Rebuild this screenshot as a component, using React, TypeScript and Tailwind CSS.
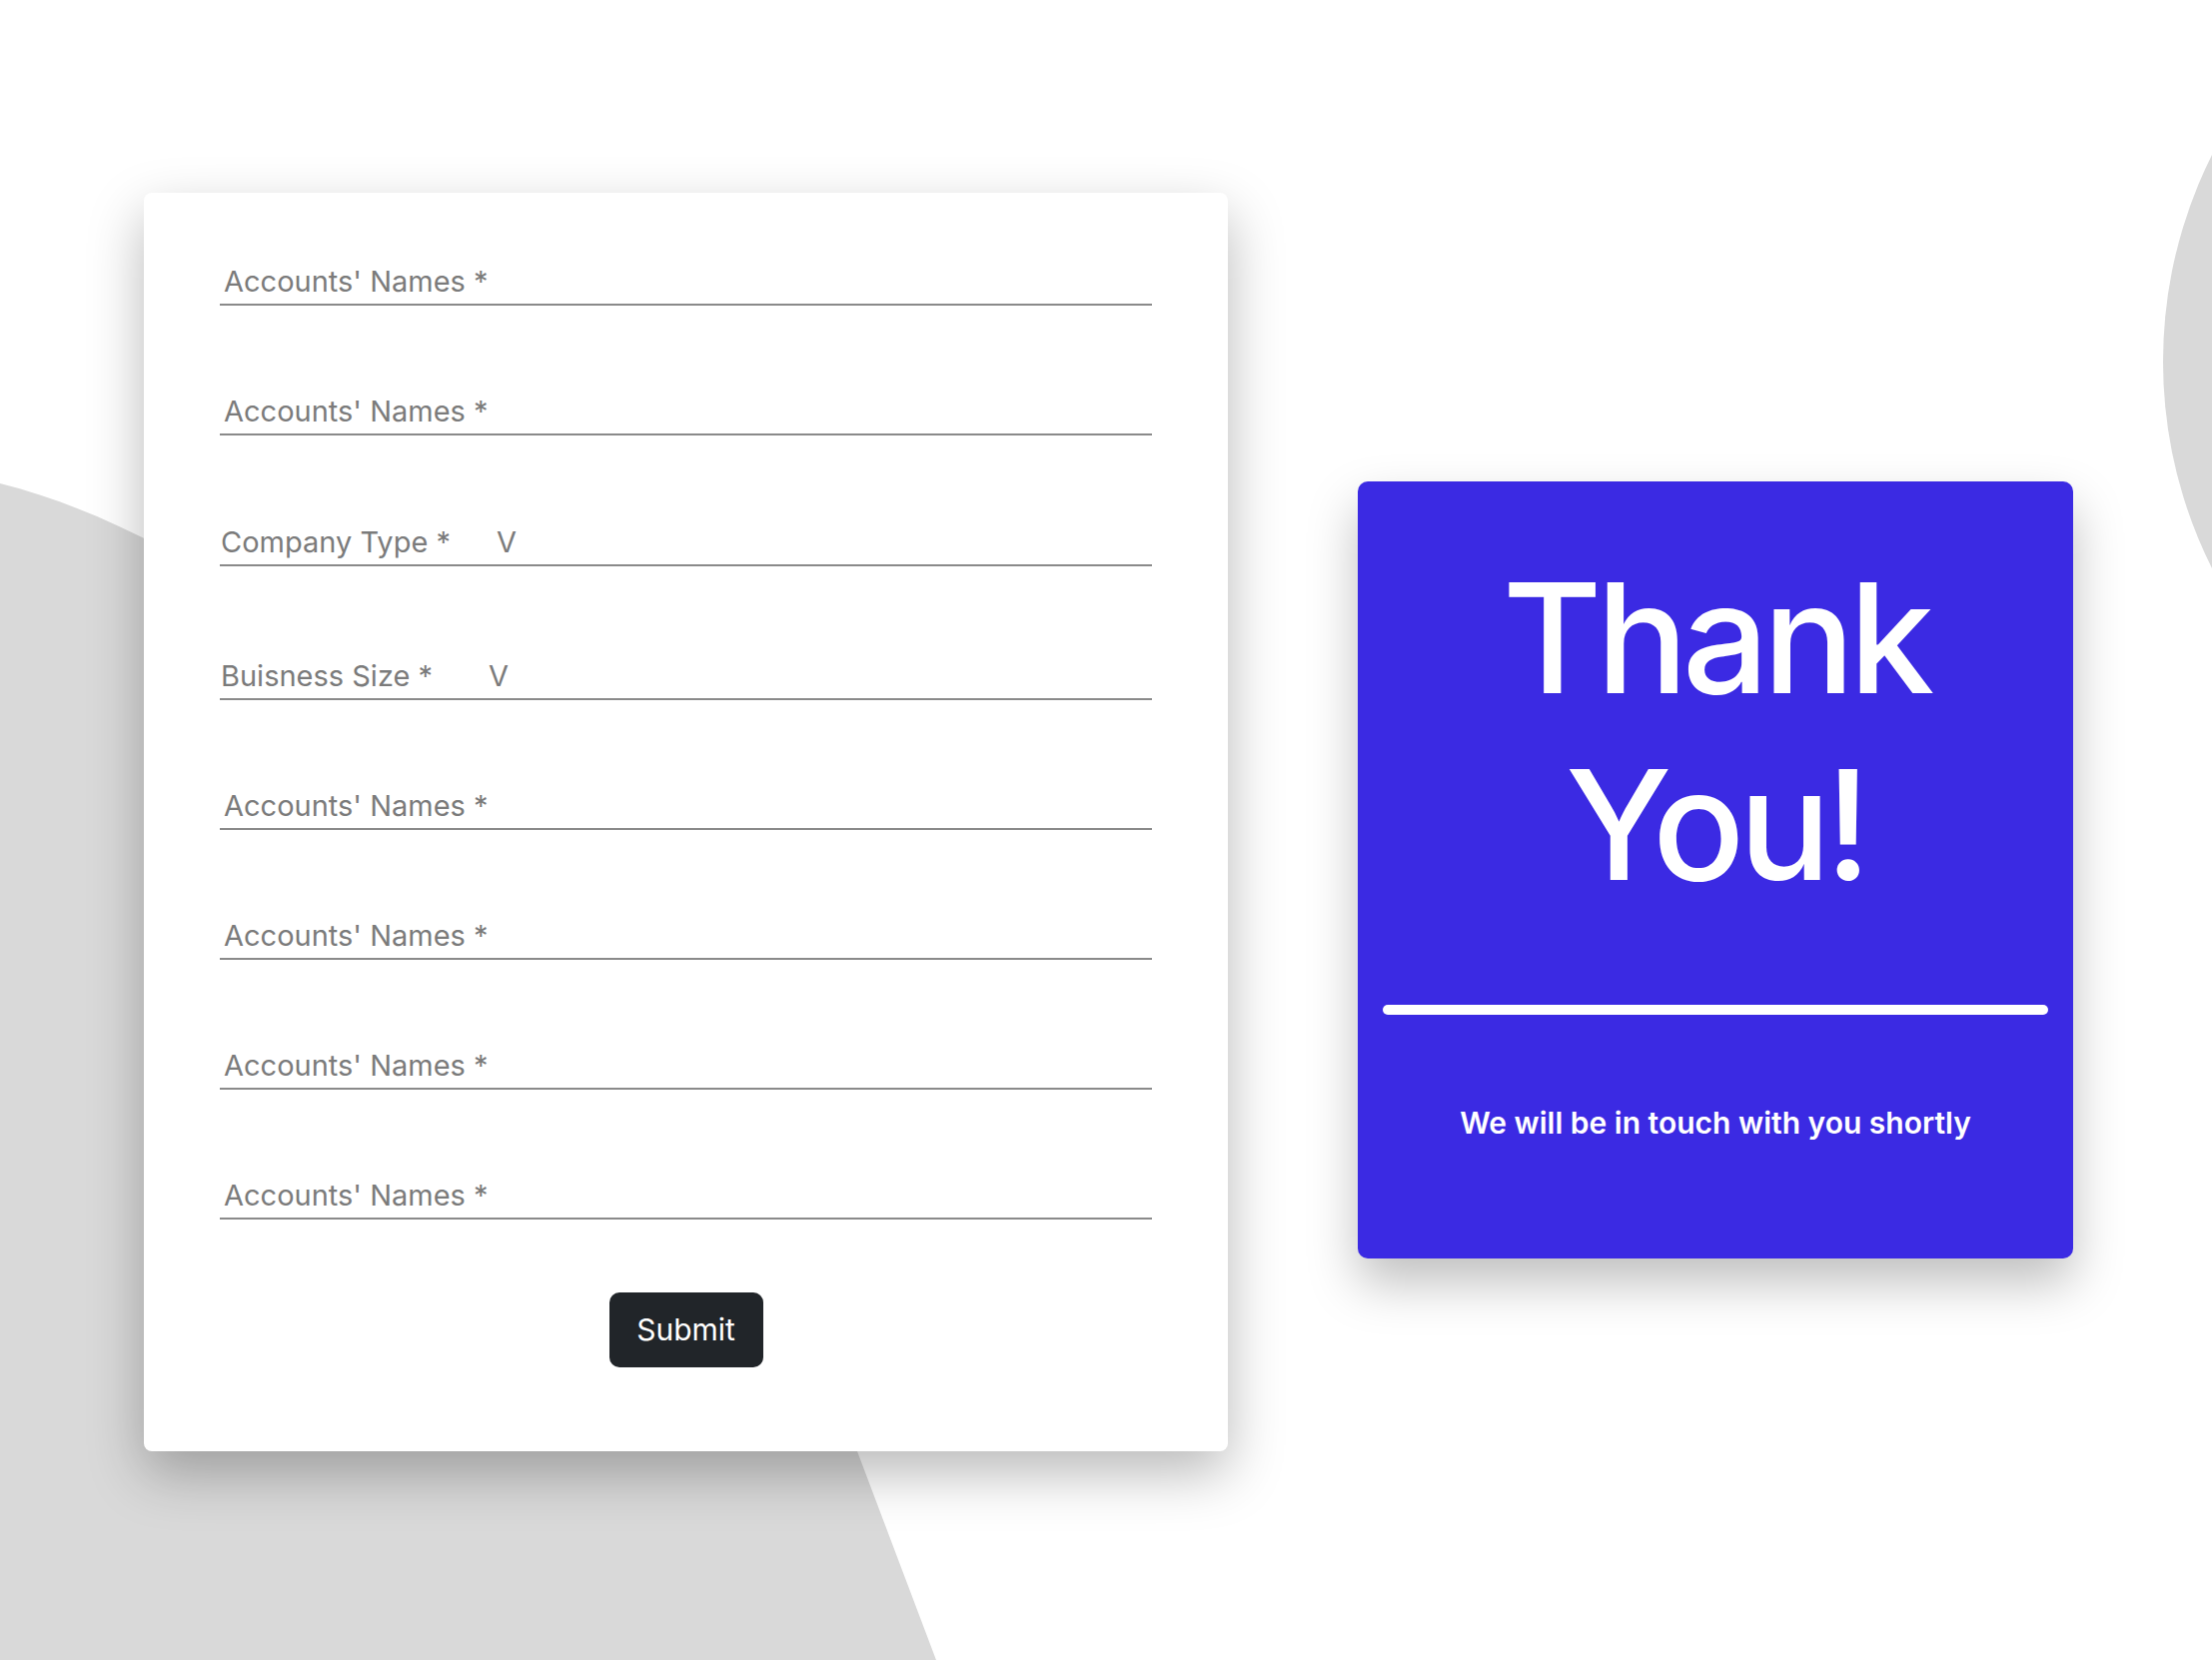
import React from 'react';

const font = { fontFamily: 'Inter, "Noto Sans", sans-serif' };

type Field = { label: string; select?: boolean; gap: string; vGap?: string };

const fields: Field[] = [
  { label: "Accounts' Names *", gap: 'mt-0' },
  { label: "Accounts' Names *", gap: 'mt-[88px]' },
  { label: 'Company Type *', select: true, gap: 'mt-[89px]', vGap: 'ml-[46px]' },
  { label: 'Buisness Size *', select: true, gap: 'mt-[92px]', vGap: 'ml-[56px]' },
  { label: "Accounts' Names *", gap: 'mt-[88px]' },
  { label: "Accounts' Names *", gap: 'mt-[88px]' },
  { label: "Accounts' Names *", gap: 'mt-[88px]' },
  { label: "Accounts' Names *", gap: 'mt-[88px]' },
];

function Backdrop() {
  return (
    <svg className="absolute inset-0 h-full w-full" viewBox="0 0 2214 1662" preserveAspectRatio="none">
      <path d="M0 484 C 300 560 650 900 858 1453 L 937 1662 L 0 1662 Z" fill="#d9d9d9" />
      <circle cx="2627" cy="362" r="462" fill="#d9d9d9" />
    </svg>
  );
}

function FormField({ field }: { field: Field }) {
  return (
    <div className={`${field.gap} border-b-2 border-[#8a8a8a] pb-[5px]`}>
      <div className={`flex items-center text-[29px] leading-[35px] text-[#7b7b7b] ${field.select ? 'pl-[1px]' : 'pl-[4px]'}`}>
        <span>{field.label}</span>
        {field.select && <span className={field.vGap}>V</span>}
      </div>
    </div>
  );
}

export default function App() {
  return (
    <div className="relative h-[1662px] w-full overflow-hidden bg-white" style={font}>
      <Backdrop />
      <div className="relative flex items-start gap-[130px] pl-[144px] pt-[193px]">
        <div className="flex w-[1085px] flex-col rounded-[8px] bg-white px-[76px] pt-[71px] pb-[84px] shadow-[0_22px_55px_rgba(0,0,0,0.28)]">
          {fields.map((f, i) => (
            <FormField key={i} field={f} />
          ))}
          <div className="mt-[73px] flex justify-center">
            <button className="h-[75px] w-[154px] rounded-[10px] bg-[#212529] text-[30px] text-white">
              Submit
            </button>
          </div>
        </div>

        <div className="mt-[289px] flex h-[778px] w-[716px] flex-col items-center rounded-[10px] bg-[#3b2ae3] px-[25px] pt-[63px] shadow-[0_25px_50px_rgba(0,0,0,0.25)]">
          <div className="text-center text-[153px] font-medium leading-[187px] tracking-[-6px] text-white">
            <div>Thank</div>
            <div>You!</div>
          </div>
          <div className="mt-[87px] h-[10px] w-full rounded-full bg-white" />
          <p className="mt-[90px] text-[30px] font-semibold leading-[36px] text-white">
            We will be in touch with you shortly
          </p>
        </div>
      </div>
    </div>
  );
}
